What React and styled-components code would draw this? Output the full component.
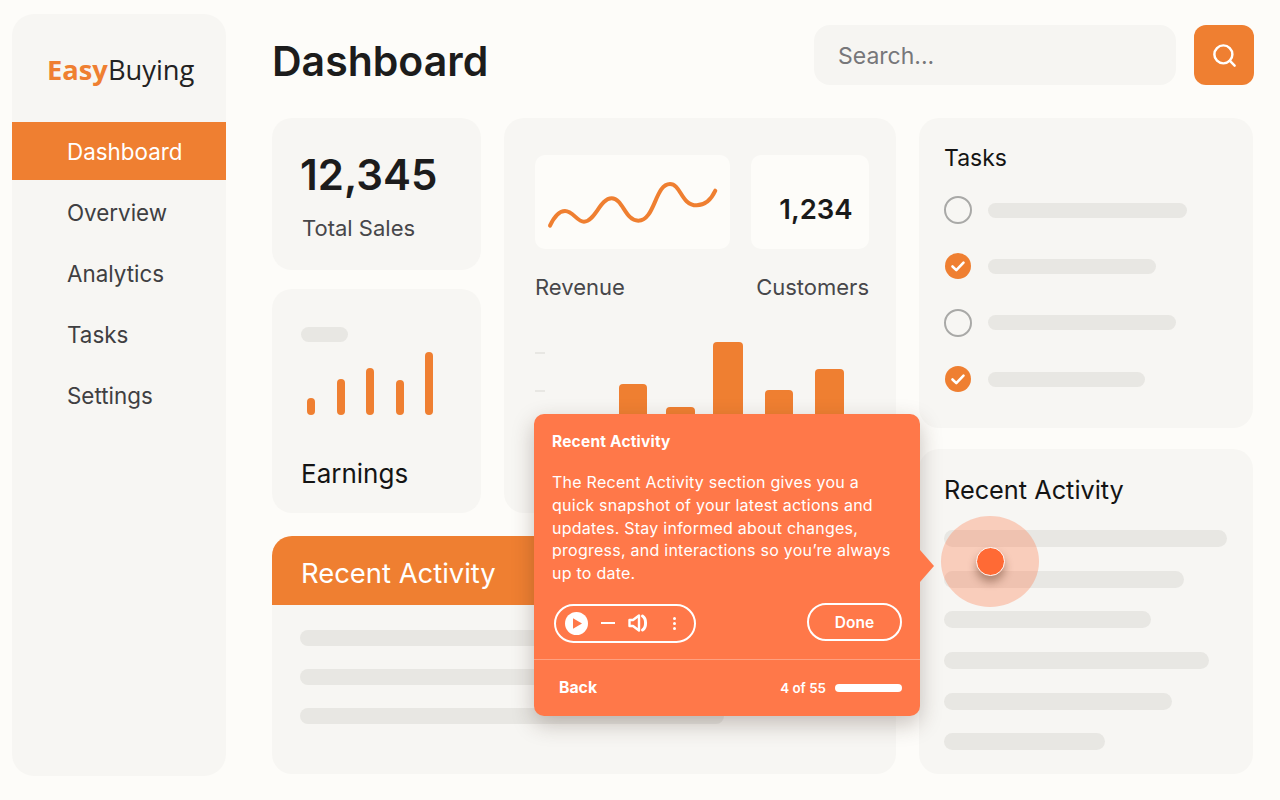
import React from 'react'
import styled, { createGlobalStyle } from 'styled-components'
import { Search } from 'lucide-react'

const GlobalStyle = createGlobalStyle`
  html, body { margin: 0; padding: 0; height: 800px; overflow: hidden; background: #fdfcf9; }
  body { font-family: "Inter", "Liberation Sans", sans-serif; }
  * { box-sizing: border-box; }
`

const ORANGE = '#ef7f31'
const CORAL = '#ff7849'
const CARD = '#f7f6f3'
const BONE = '#e8e7e3'

const Page = styled.div`
  position: relative;
  width: 1280px;
  height: 800px;
  display: flex;
  gap: 46px;
  padding: 14px 26px 24px 12px;
`

const Sidebar = styled.aside`
  width: 214px;
  height: 762px;
  background: ${CARD};
  border-radius: 22px;
  overflow: hidden;
  flex-shrink: 0;
`

const Logo = styled.div`
  height: 108px;
  padding: 38px 0 0 35px;
  font-family: "Open Sans", sans-serif;
  font-size: 27.3px;
  line-height: 36px;
  color: #222;
  b { color: ${ORANGE}; font-weight: 700; }
`

const Nav = styled.nav`
  display: flex;
  flex-direction: column;
  gap: 3px;
`

const NavItem = styled.a`
  display: flex;
  align-items: center;
  height: 58px;
  padding-left: 55px;
  font-size: 22.4px;
  color: ${p => (p.$active ? '#fff' : '#3f3f42')};
  background: ${p => (p.$active ? ORANGE : 'transparent')};
`

const Main = styled.main`
  flex: 1;
  padding-top: 11px;
  display: flex;
  flex-direction: column;
`

const Header = styled.header`
  height: 60px;
  margin-bottom: 33px;
  display: flex;
  align-items: center;
  gap: 18px;
`

const Title = styled.h1`
  flex: 1;
  margin: 11px 0 0;
  font-size: 41px;
  font-weight: 600;
  color: #1c1c1c;
`

const SearchBox = styled.div`
  width: 362px;
  height: 60px;
  display: flex;
  align-items: center;
  padding: 2px 0 0 24px;
  background: #f6f5f2;
  border-radius: 16px;
  font-size: 23px;
  color: #77777a;
`

const SearchButton = styled.button`
  width: 60px;
  height: 60px;
  border: none;
  padding: 0;
  display: flex;
  align-items: center;
  justify-content: center;
  background: ${ORANGE};
  border-radius: 12px;
  color: #fff;
`

const Content = styled.div`
  display: flex;
  gap: 23px;
`

const LeftArea = styled.div`
  width: 624px;
  display: flex;
  flex-direction: column;
  gap: 23px;
`

const TopRow = styled.div`
  display: flex;
  gap: 23px;
`

const SmallColumn = styled.div`
  width: 209px;
  display: flex;
  flex-direction: column;
  gap: 19px;
`

const Card = styled.section`
  background: ${CARD};
  border-radius: 20px;
  overflow: hidden;
`

const SalesCard = styled(Card)`
  height: 152px;
  padding: 30px 0 0 28px;
`

const BigNumber = styled.div`
  font-size: 42px;
  line-height: 54px;
  font-weight: 600;
  color: #1c1c1c;
`

const Caption = styled.div`
  margin: 11px 0 0 2px;
  font-size: 22px;
  line-height: 30px;
  color: #47474a;
`

const EarningsCard = styled(Card)`
  height: 224px;
  padding: 38px 0 0 29px;
`

const Pill = styled.div`
  width: ${p => p.$w}px;
  height: ${p => p.$h || 15}px;
  border-radius: 9px;
  background: ${BONE};
`

const MiniBars = styled.div`
  height: 63px;
  margin: 10px 0 0 6px;
  display: flex;
  align-items: flex-end;
  gap: 21.5px;
`

const MiniBar = styled.div`
  width: 8px;
  border-radius: 4px;
  background: ${ORANGE};
`

const EarningsLabel = styled.div`
  margin-top: 43px;
  font-size: 26px;
  line-height: 32px;
  color: #141414;
`

const CenterCard = styled(Card)`
  width: 392px;
  height: 395px;
  padding: 37px 27px 0 31px;
`

const TileRow = styled.div`
  display: flex;
  justify-content: space-between;
`

const Tile = styled.div`
  width: ${p => p.$w}px;
  height: 94px;
  background: #fdfcf9;
  border-radius: 10px;
  display: flex;
  align-items: center;
  justify-content: center;
`

const TileNumber = styled.div`
  margin: 14px 0 0 12px;
  font-size: 27.5px;
  font-weight: 600;
  color: #1a1a1a;
`

const LabelRow = styled.div`
  margin-top: 24px;
  display: flex;
  justify-content: space-between;
  font-size: 22px;
  line-height: 28px;
  color: #47474a;
`

const Chart = styled.div`
  margin-top: 41px;
  height: 110px;
  display: flex;
  align-items: flex-end;
`

const Ticks = styled.div`
  align-self: flex-start;
  width: 84px;
  padding-top: 10px;
  display: flex;
  flex-direction: column;
  gap: 36px;
`

const Tick = styled.div`
  width: 10px;
  height: 2px;
  background: ${BONE};
`

const Bars = styled.div`
  display: flex;
  align-items: flex-end;
`

const Bar = styled.div`
  width: ${p => p.$w}px;
  margin-left: ${p => p.$gap}px;
  border-radius: 4px 4px 0 0;
  background: ${ORANGE};
`

const ActivityCard = styled(Card)`
  height: 238px;
`

const ActivityHead = styled.div`
  height: 69px;
  display: flex;
  align-items: center;
  padding: 4px 0 0 29px;
  background: ${ORANGE};
  color: #fff;
  font-size: 27.4px;
`

const ActivityRows = styled.div`
  padding: 25px 0 0 28px;
  display: flex;
  flex-direction: column;
  gap: 23px;
`

const RightColumn = styled.div`
  width: 334px;
  display: flex;
  flex-direction: column;
  gap: 21px;
`

const TasksCard = styled(Card)`
  height: 310px;
  padding: 25px 0 0 25px;
`

const CardTitle = styled.div`
  padding-top: ${p => p.$nudge || 0}px;
  font-size: ${p => p.$size}px;
  line-height: 30px;
  color: #141414;
`

const TaskList = styled.div`
  margin-top: 23px;
  display: flex;
  flex-direction: column;
  gap: 28.4px;
`

const TaskRow = styled.div`
  height: 28px;
  display: flex;
  align-items: center;
  gap: 16px;
`

const Radio = styled.div`
  width: 28px;
  height: 28px;
  border-radius: 50%;
  border: 2px solid #a9a9a7;
`

const RecentCard = styled(Card)`
  height: 325px;
  padding: 25px 0 0 25px;
`

const RecentRows = styled.div`
  margin-top: 25px;
  display: flex;
  flex-direction: column;
  gap: 23.7px;
`

const Hotspot = styled.div`
  position: absolute;
  left: 941px;
  top: 516px;
  width: 98px;
  height: 91px;
  border-radius: 50%;
  background: rgba(255, 110, 60, 0.3);
  display: flex;
  align-items: center;
  justify-content: center;
`

const HotDot = styled.div`
  width: 29px;
  height: 29px;
  border-radius: 50%;
  background: #ff6a35;
  border: 1.5px solid #fff;
  box-shadow: 0 6px 9px rgba(80, 40, 20, 0.4);
`

const Tooltip = styled.div`
  position: absolute;
  left: 534px;
  top: 414px;
  width: 386px;
  height: 302px;
  background: ${CORAL};
  border-radius: 10px;
  color: #fff;
  font-family: "Inter", sans-serif;
  box-shadow: 0 8px 22px rgba(60, 40, 30, 0.28);
  &::after {
    content: '';
    position: absolute;
    right: -14px;
    top: 136px;
    border-left: 14px solid ${CORAL};
    border-top: 16px solid transparent;
    border-bottom: 16px solid transparent;
  }
`

const TipTitle = styled.div`
  padding: 18px 18px 0;
  font-size: 15.5px;
  line-height: 20px;
  font-weight: 700;
  letter-spacing: 0.2px;
`

const TipBody = styled.p`
  margin: 19px 18px 0;
  font-size: 16px;
  line-height: 22.8px;
  letter-spacing: 0.25px;
  white-space: nowrap;
`

const TipControls = styled.div`
  margin-top: 18px;
  padding: 0 18px 0 20px;
  height: 40px;
  display: flex;
  align-items: flex-start;
  justify-content: space-between;
`

const Player = styled.div`
  width: 142px;
  height: 39px;
  margin-top: 1px;
  border: 2px solid #fff;
  border-radius: 20px;
  display: flex;
  align-items: center;
  padding-left: 9px;
`

const PlayButton = styled.div`
  width: 23px;
  height: 23px;
  border-radius: 50%;
  background: #fff;
  display: flex;
  align-items: center;
  justify-content: center;
`

const Dash = styled.div`
  width: 14px;
  height: 2px;
  margin: 0 13px;
  background: #fff;
`

const Kebab = styled.div`
  margin-left: 23px;
  display: flex;
  flex-direction: column;
  gap: 2px;
  span { width: 3px; height: 3px; border-radius: 50%; background: #fff; }
`

const DoneButton = styled.div`
  width: 95px;
  height: 38px;
  padding-top: 1px;
  border: 2px solid #fff;
  border-radius: 19px;
  display: flex;
  align-items: center;
  justify-content: center;
  font-size: 15.5px;
  font-weight: 600;
`

const TipFooter = styled.div`
  margin-top: 16px;
  height: 57px;
  padding: 0 18px 0 25px;
  border-top: 1px solid rgba(255, 255, 255, 0.3);
  display: flex;
  align-items: center;
  justify-content: space-between;
`

const BackLink = styled.div`
  font-size: 15.8px;
  font-weight: 700;
`

const Progress = styled.div`
  display: flex;
  align-items: center;
  gap: 9px;
  font-size: 13.4px;
  font-weight: 600;
`

const ProgressBar = styled.div`
  width: 67px;
  height: 8px;
  border-radius: 4px;
  background: #fff;
`

const CheckMark = () => (
  <svg width="28" height="28" viewBox="0 0 28 28">
    <circle cx="14" cy="14" r="13" fill={ORANGE} />
    <path d="M8.5 14.5l3.8 3.6 7.2-7.4" fill="none" stroke="#fff" strokeWidth="2.6" strokeLinecap="round" strokeLinejoin="round" />
  </svg>
)

const Sparkline = () => (
  <svg width="195" height="94" viewBox="0 0 195 94">
    <path
      d="M15 70.7C20 60 25 56 30 56C38 56 42 66.7 49 66.7C60 66.7 65 43.3 76.7 43.3C88 43.3 90 65.7 103.3 65.7C120 65.7 120 29 135 29C146 29 146 50.3 161.7 50.3C170 50.3 176 45 180.3 35.7"
      fill="none"
      stroke={ORANGE}
      strokeWidth="4"
      strokeLinecap="round"
    />
  </svg>
)

const Speaker = () => (
  <svg width="22" height="20" viewBox="0 0 22 20">
    <path d="M1.5 7h3.5l6-4.5v15L5 13H1.5z" fill="none" stroke="#fff" strokeWidth="2.4" strokeLinejoin="round" />
    <path d="M14.5 3C18.6 5.5 18.6 14.5 14.5 17" fill="none" stroke="#fff" strokeWidth="3" strokeLinecap="round" />
  </svg>
)

const navItems = ['Dashboard', 'Overview', 'Analytics', 'Tasks', 'Settings']
const earnings = [17, 36, 47, 35, 63]
const revenue = [
  { w: 28, h: 68, gap: 0 },
  { w: 29, h: 45, gap: 19 },
  { w: 30, h: 110, gap: 18 },
  { w: 28, h: 62, gap: 22 },
  { w: 29, h: 83, gap: 22 },
]
const tasks = [
  { done: false, w: 199 },
  { done: true, w: 168 },
  { done: false, w: 188 },
  { done: true, w: 157 },
]
const recentRows = [283, 240, 207, 265, 228, 161]

export default function App() {
  return (
    <Page>
      <GlobalStyle />
      <Sidebar>
        <Logo><b>Easy</b>Buying</Logo>
        <Nav>
          {navItems.map((item, i) => (
            <NavItem key={item} $active={i === 0}>{item}</NavItem>
          ))}
        </Nav>
      </Sidebar>

      <Main>
        <Header>
          <Title>Dashboard</Title>
          <SearchBox>Search...</SearchBox>
          <SearchButton><Search size={27} strokeWidth={2.2} /></SearchButton>
        </Header>

        <Content>
          <LeftArea>
            <TopRow>
              <SmallColumn>
                <SalesCard>
                  <BigNumber>12,345</BigNumber>
                  <Caption>Total Sales</Caption>
                </SalesCard>
                <EarningsCard>
                  <Pill $w={47} />
                  <MiniBars>
                    {earnings.map((h, i) => <MiniBar key={i} style={{ height: h }} />)}
                  </MiniBars>
                  <EarningsLabel>Earnings</EarningsLabel>
                </EarningsCard>
              </SmallColumn>

              <CenterCard>
                <TileRow>
                  <Tile $w={195}><Sparkline /></Tile>
                  <Tile $w={118}><TileNumber>1,234</TileNumber></Tile>
                </TileRow>
                <LabelRow><span>Revenue</span><span>Customers</span></LabelRow>
                <Chart>
                  <Ticks><Tick /><Tick /></Ticks>
                  <Bars>
                    {revenue.map((b, i) => <Bar key={i} $w={b.w} $gap={b.gap} style={{ height: b.h }} />)}
                  </Bars>
                </Chart>
              </CenterCard>
            </TopRow>

            <ActivityCard>
              <ActivityHead>Recent Activity</ActivityHead>
              <ActivityRows>
                <Pill $w={540} $h={16} />
                <Pill $w={540} $h={16} />
                <Pill $w={424} $h={16} />
              </ActivityRows>
            </ActivityCard>
          </LeftArea>

          <RightColumn>
            <TasksCard>
              <CardTitle $size={23}>Tasks</CardTitle>
              <TaskList>
                {tasks.map((t, i) => (
                  <TaskRow key={i}>
                    {t.done ? <CheckMark /> : <Radio />}
                    <Pill $w={t.w} />
                  </TaskRow>
                ))}
              </TaskList>
            </TasksCard>
            <RecentCard>
              <CardTitle $size={25.3} $nudge={1}>Recent Activity</CardTitle>
              <RecentRows>
                {recentRows.map((w, i) => <Pill key={i} $w={w} $h={17} />)}
              </RecentRows>
            </RecentCard>
          </RightColumn>
        </Content>
      </Main>

      <Hotspot><HotDot /></Hotspot>

      <Tooltip>
        <TipTitle>Recent Activity</TipTitle>
        <TipBody>
          The Recent Activity section gives you a<br />
          quick snapshot of your latest actions and<br />
          updates. Stay informed about changes,<br />
          progress, and interactions so you’re always<br />
          up to date.
        </TipBody>
        <TipControls>
          <Player>
            <PlayButton>
              <svg width="13" height="13" viewBox="0 0 13 13"><path d="M3 1.2l9 5.3-9 5.3z" fill={CORAL} /></svg>
            </PlayButton>
            <Dash />
            <Speaker />
            <Kebab><span /><span /><span /></Kebab>
          </Player>
          <DoneButton>Done</DoneButton>
        </TipControls>
        <TipFooter>
          <BackLink>Back</BackLink>
          <Progress>4 of 55<ProgressBar /></Progress>
        </TipFooter>
      </Tooltip>
    </Page>
  )
}
